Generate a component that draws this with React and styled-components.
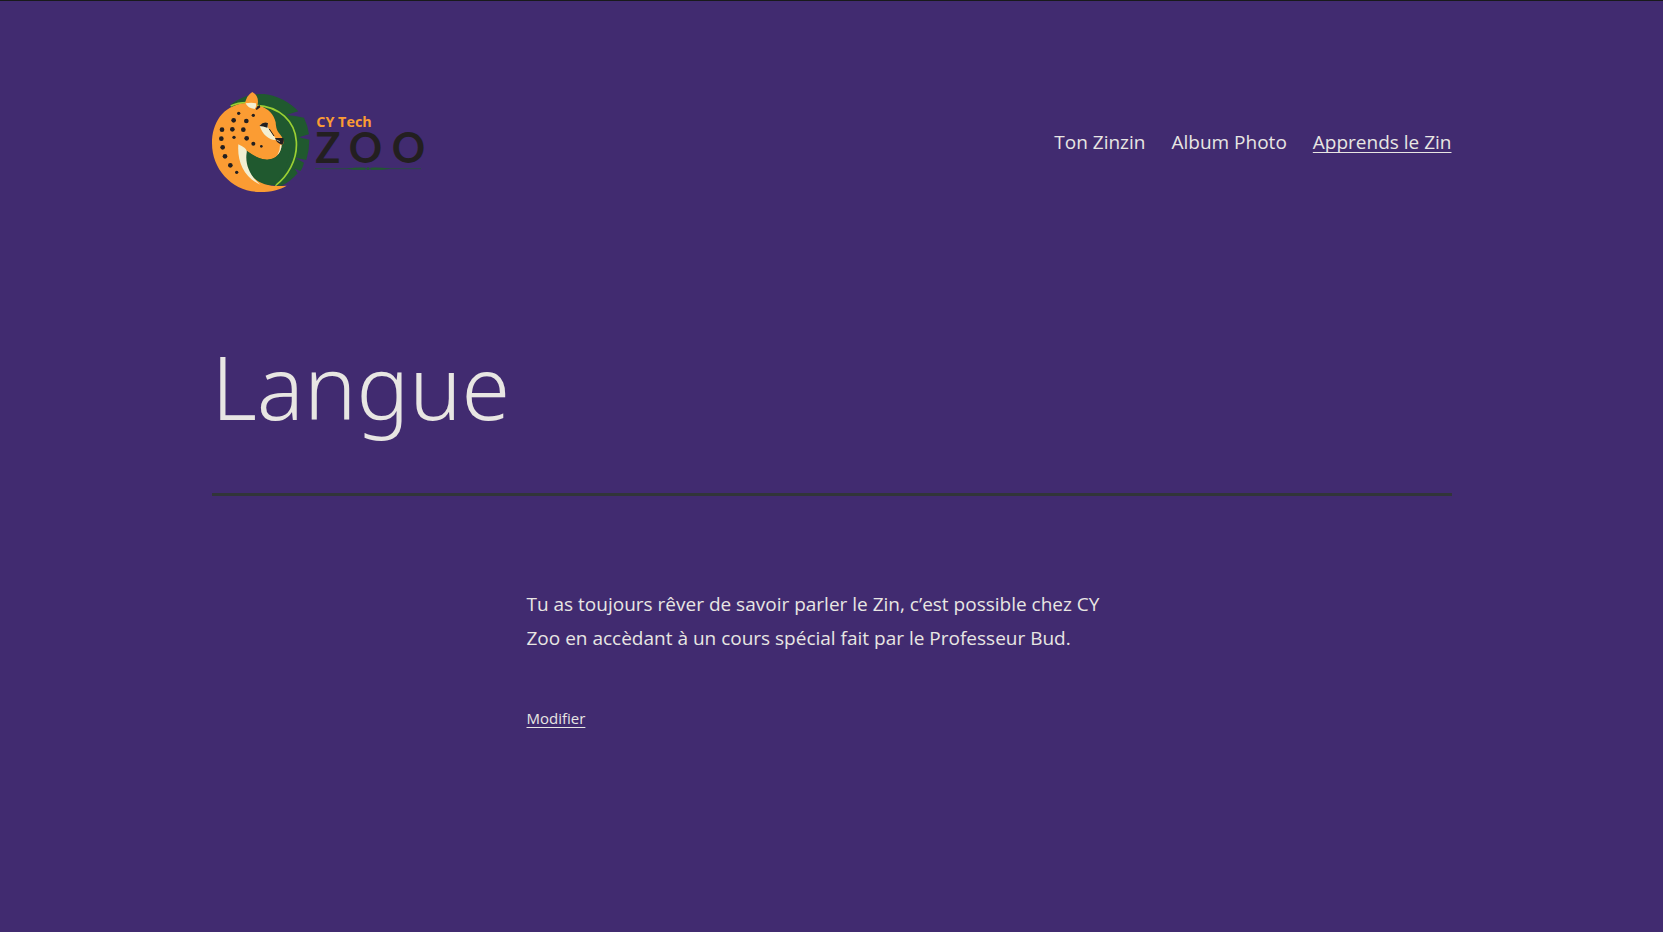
import React from "react";
import styled, { createGlobalStyle } from "styled-components";

const text = "#e8e6e3";

const GlobalStyle = createGlobalStyle`
  *, *::before, *::after { box-sizing: border-box; }
  body {
    margin: 0;
    background: #412b70;
    color: ${text};
    font-family: "Open Sans", "Noto Sans", sans-serif;
    font-size: 19px;
    line-height: 34px;
  }
`;

const Page = styled.div`
  min-height: 100vh;
  border-top: 1px solid #181a1b;
  padding: 0 32px;
`;

const Wide = styled.div`
  max-width: 1240px;
  margin: 0 auto;
`;

const Header = styled.header`
  display: flex;
  align-items: center;
  justify-content: space-between;
  gap: 32px;
  flex-wrap: wrap;
  padding: 89px 0 120px;
`;

const LogoLink = styled.a`
  display: block;
  line-height: 0;
`;

const LogoSvg = styled.svg`
  display: block;
  width: 214px;
  height: 104px;
`;

const Nav = styled.nav`
  display: flex;
  flex-wrap: wrap;
  gap: 26px;
`;

const TextLink = styled.a`
  color: ${text};
  font-size: ${(p) => (p.$small ? "15px" : "19px")};
  text-decoration: ${(p) => (p.$underlined ? "underline" : "none")};
  text-decoration-thickness: 1px;
  text-underline-offset: 3px;
  text-decoration-skip-ink: none;
`;

const TitleBar = styled.div`
  padding-bottom: 35px;
  border-bottom: 3px solid #313539;
`;

const Title = styled.h1`
  margin: 0;
  font-family: "Noto Sans", "Open Sans", sans-serif;
  font-size: 88px;
  font-weight: 300;
  line-height: 144px;
`;

const Content = styled.div`
  max-width: 610px;
  margin: 0 auto;
  padding: 91px 0 96px;
`;

const Paragraph = styled.p`
  margin: 0 0 45px;
`;

const spots = [
  [116, 100, 5], [160, 106, 5], [101, 121, 7], [139, 123, 7],
  [66, 149, 7], [97, 148, 7], [130, 149, 7], [64, 176, 7],
  [102, 172, 5], [140, 175, 7], [68, 202, 7], [160, 191, 6],
  [184, 199, 4], [75, 229, 7], [91, 256, 7], [110, 277, 5],
];

function Logo() {
  return (
    <LogoSvg viewBox="36 30 642 312" role="img" aria-label="CY Tech Zoo">
      <path
        fill="#20592f"
        d="M92 74C122 50 158 40 192 42C232 47 270 66 295 94L259 105Q286 107 312 113Q323 135 327 163L297 172L328 179Q328 211 319 240L285 233L312 248Q309 261 302 273L284 266L293 280C279 296 263 309 244 318L150 310L96 240Z"
      />
      <path
        fill="none"
        stroke="#9bd033"
        strokeWidth="5"
        d="M92 78Q114 68 140 68M168 76C238 79 285 124 289 184C293 240 262 290 226 317"
      />
      <path
        fill="#fb9c33"
        d="M134 70C66 77 36 132 36 190C36 270 98 336 180 336C213 336 240 329 260 317C205 323 164 308 145 273L122 202C145 214 166 237 201 239C226 240 243 222 245 196L251 189Q253 180 241 164C231 154 228 144 227 127C222 104 204 84 180 79L168 77Z"
      />
      <path fill="#20592f" d="M140 212C157 222 173 238 201 239C224 239 240 225 244 205L270 212L255 270L226 315C173 318 132 272 140 212Z" />
      <path fill="#f3efd2" d="M115 193C132 201 143 209 140 218C135 249 147 286 181 314C132 292 111 246 115 193Z" />
      <path fill="#f3efd2" d="M179 137Q188 127 203 128L203 142L226 174L232 181C204 180 187 162 179 137Z" />
      <path fill="#f3efd2" d="M245 193Q244 214 232 226Q241 211 240 196Z" />
      <path fill="#231f20" d="M178 138Q190 124 204 129L202 143Q189 139 178 138Z" />
      <path fill="none" stroke="#231f20" strokeWidth="3" d="M208 147L222 168" />
      <path fill="#231f20" d="M225 174L250 174Q254 188 246 194Q231 191 225 174Z" />
      <path fill="none" stroke="#f3efd2" strokeWidth="2" d="M230 180L240 185" />
      <path fill="#231f20" d="M164 83L179 75L181 82L170 90Z" />
      <path fill="#fb9c33" d="M134 73Q140 45 157 36C174 45 179 65 168 86Q145 89 134 73Z" />
      <path fill="#f3efd2" d="M137 70Q154 66 168 70Q170 80 164 87Q143 85 137 70Z" />
      {spots.map(([x, y, r]) => (
        <circle key={`${x}-${y}`} cx={x} cy={y} r={r} fill="#231f20" />
      ))}
      <text x="349" y="141" fill="#fb9c33" fontSize="43" fontWeight="700" fontFamily="Open Sans, sans-serif">
        CY Tech
      </text>
      <text x="346 446 575" y="248" fill="#231f20" fontSize="124" fontWeight="700" fontFamily="Lato, sans-serif">
        ZOO
      </text>
      <path stroke="#20592f" strokeWidth="2" d="M345 266H663" />
      <path fill="#20592f" d="M440 266Q475 261 496 263V269Q475 271 440 266ZM512 263Q535 261 570 266Q535 271 512 269Z" />
      <circle cx="504" cy="266" r="4" fill="#20592f" />
    </LogoSvg>
  );
}

export default function App() {
  return (
    <>
      <GlobalStyle />
      <Page>
        <Wide>
          <Header>
            <LogoLink href="#accueil">
              <Logo />
            </LogoLink>
            <Nav aria-label="Menu principal">
              <TextLink href="#zinzin">Ton Zinzin</TextLink>
              <TextLink href="#album">Album Photo</TextLink>
              <TextLink href="#langue" $underlined aria-current="page">
                Apprends le Zin
              </TextLink>
            </Nav>
          </Header>
          <main>
            <TitleBar>
              <Title>Langue</Title>
            </TitleBar>
            <Content>
              <Paragraph>
                Tu as toujours rêver de savoir parler le Zin, c’est possible chez CY Zoo en accèdant à un cours
                spécial fait par le Professeur Bud.
              </Paragraph>
              <TextLink href="#modifier" $small $underlined>
                Modifier
              </TextLink>
            </Content>
          </main>
        </Wide>
      </Page>
    </>
  );
}
